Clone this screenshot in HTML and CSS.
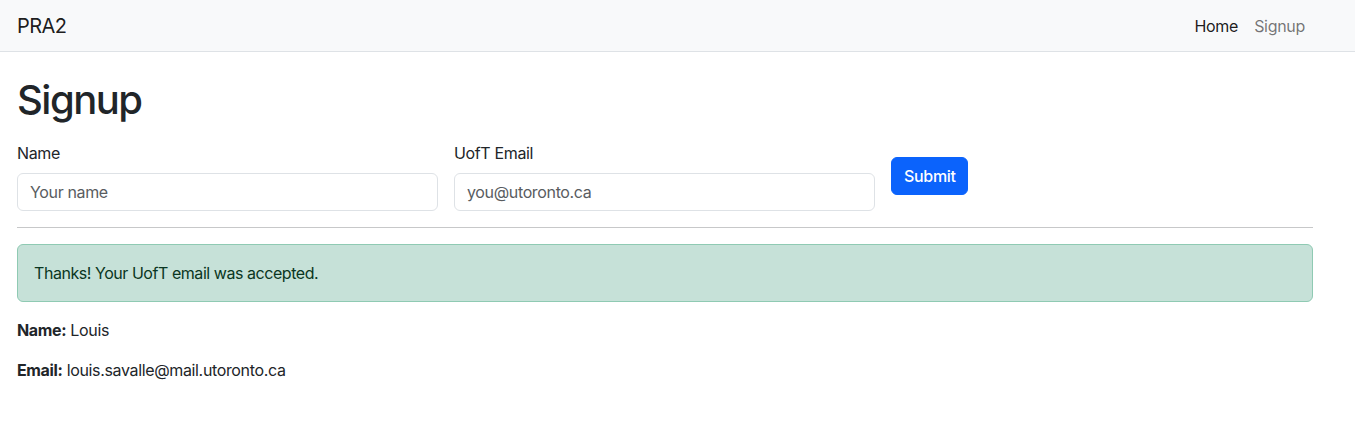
FILE: index.html
```html
<!DOCTYPE html>
<html lang="en">
<head>
<meta charset="utf-8">
<title>PRA2 - Signup</title>
<link rel="stylesheet" href="styles.css">
</head>
<body>
<nav class="navbar">
  <div class="nav-inner">
    <a class="brand" href="#">PRA2</a>
    <div class="nav-links">
      <a class="nav-link active" href="#">Home</a>
      <a class="nav-link" href="#">Signup</a>
    </div>
  </div>
</nav>
<main class="container">
  <h1 class="title">Signup</h1>
  <form class="form-row">
    <div class="col">
      <label class="form-label" for="name">Name</label>
      <input class="form-control" id="name" type="text" placeholder="Your name">
    </div>
    <div class="col">
      <label class="form-label" for="email">UofT Email</label>
      <input class="form-control" id="email" type="email" placeholder="you@utoronto.ca">
    </div>
    <div class="col-auto">
      <button class="btn" type="button">Submit</button>
    </div>
  </form>
  <hr class="divider">
  <div class="alert">Thanks! Your UofT email was accepted.</div>
  <p class="info"><strong>Name:</strong> Louis</p>
  <p class="info"><strong>Email:</strong> louis.savalle@mail.utoronto.ca</p>
</main>
</body>
</html>
```
FILE: styles.css
```css
* { box-sizing: border-box; }
html, body { margin: 0; padding: 0; }
body {
  font-family: Inter, "Liberation Sans", sans-serif;
  font-size: 16px;
  line-height: 24px;
  color: #212529;
  background: #fff;
}
.navbar {
  background: #f8f9fa;
  border-bottom: 1px solid #dee2e6;
  height: 52px;
}
.nav-inner {
  width: 1296px;
  margin-left: 17px;
  height: 51px;
  display: flex;
  align-items: center;
  justify-content: space-between;
}
.brand {
  font-size: 20px;
  line-height: 30px;
  color: rgba(0,0,0,.9);
  text-decoration: none;
  letter-spacing: -0.6px;
}
.nav-links { display: flex; }
.nav-link {
  padding: 0 8px;
  color: rgba(0,0,0,.55);
  text-decoration: none;
  letter-spacing: -0.3px;
}
.nav-link.active { color: rgba(0,0,0,.9); }
.container {
  width: 1296px;
  margin-left: 17px;
  padding-top: 24px;
}
.title {
  font-size: 40px;
  line-height: 48px;
  font-weight: 500;
  margin: 0 0 17px;
  letter-spacing: -1.5px;
}
.form-row {
  display: flex;
  align-items: center;
  gap: 16px;
}
.col { width: 421px; }
.col-auto { flex: 0 0 auto; }
.form-label {
  display: block;
  margin-bottom: 8px;
  letter-spacing: -0.35px;
}
.form-control {
  display: block;
  width: 100%;
  height: 38px;
  padding: 6px 12px;
  font: inherit;
  letter-spacing: -0.35px;
  color: #212529;
  border: 1px solid #dee2e6;
  border-radius: 6px;
  background: #fff;
}
.form-control::placeholder { color: #595c5f; }
.btn {
  font: inherit;
  font-weight: 500;
  letter-spacing: -0.3px;
  color: #fff;
  background: #0b63fc;
  border: 1px solid #0b63fc;
  border-radius: 6px;
  height: 38px;
  padding: 6px 12px;
  width: 77px;
}
.divider {
  border: 0;
  border-top: 1px solid #c7c8c9;
  margin: 16px 0;
}
.alert {
  background: #c6e1d8;
  border: 1px solid #8fcab3;
  color: #0a3622;
  border-radius: 6px;
  padding: 16px;
  margin-bottom: 16px;
  letter-spacing: -0.45px;
}
.info {
  margin: 0 0 16px;
  letter-spacing: -0.35px;
}
.info strong { font-weight: 700; }
```
